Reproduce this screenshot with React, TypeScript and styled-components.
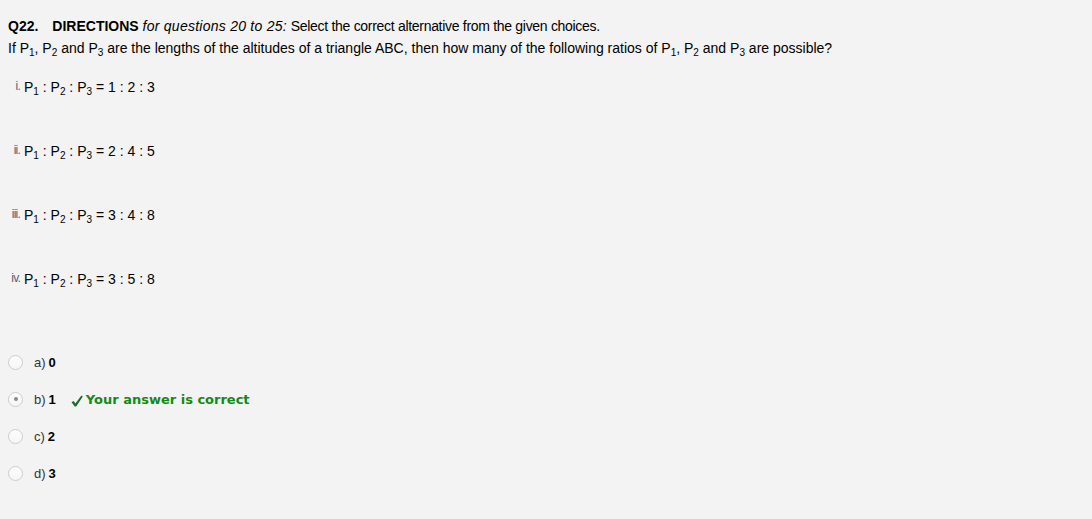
import React from "react";
import styled, { createGlobalStyle } from "styled-components";

// STYLES
const GlobalStyle = createGlobalStyle`
  html, body {
    margin: 0;
    padding: 0;
    background: #f3f3f3;
  }
`;

const Page = styled.main`
  min-height: 519px;
  padding: 17px 8px 0 8px;
  font-family: "Liberation Sans", Arial, sans-serif;
  font-size: 14px;
  color: #000;
`;

const Heading = styled.div`
  line-height: 18px;
  white-space: nowrap;
`;

const Number = styled.b`
  margin-right: 14px;
`;

const Note = styled.i`
  letter-spacing: 0.25px;
`;

const Instruction = styled.span`
  letter-spacing: -0.3px;
`;

const Question = styled.div`
  line-height: 18px;
  margin-top: 4px;
`;

const Statements = styled.ol`
  list-style: none;
  margin: 21px 0 0 0;
  padding: 0;
  display: flex;
  flex-direction: column;
  gap: 46px;
`;

const Statement = styled.li`
  display: flex;
  align-items: baseline;
  line-height: 18px;
  height: 18px;
`;

const Numeral = styled.span`
  font-size: 12px;
  color: #5a6070;
  width: 12px;
  padding-right: 4px;
  text-align: right;
  letter-spacing: -0.8px;
  position: relative;
  top: -2px;
`;

const Sub = styled.sub`
  font-size: 10px;
  vertical-align: -3px;
  line-height: 0;
`;

const Options = styled.div`
  margin-top: 66px;
  display: flex;
  flex-direction: column;
  gap: 21px;
`;

const Option = styled.label`
  display: flex;
  align-items: center;
  height: 16px;
  font-size: 13px;
`;

const Radio = styled.span<{ $checked?: boolean }>`
  width: 13px;
  height: 13px;
  border-radius: 50%;
  border: 1px solid #cdcdcd;
  background: linear-gradient(180deg, #fdfdfd 0%, #f6f6f6 100%);
  display: flex;
  align-items: center;
  justify-content: center;
  margin-right: 11px;

  &::after {
    content: "";
    width: 4px;
    height: 4px;
    border-radius: 50%;
    background: ${(p) => (p.$checked ? "#8a8a8a" : "transparent")};
  }
`;

const Letter = styled.span`
  color: #333;
  margin-right: 3px;
`;

const Feedback = styled.span`
  display: flex;
  align-items: center;
  margin-left: 15px;
  font-family: "DejaVu Sans", Verdana, sans-serif;
  font-weight: bold;
  font-size: 13px;
  color: #138a13;

  svg {
    margin-right: 3px;
    margin-top: 3px;
  }
`;

const sub = (n: number) => (
  <>
    P<Sub>{n}</Sub>
  </>
);

const ratios = [
  { n: "i.", v: "1 : 2 : 3" },
  { n: "ii.", v: "2 : 4 : 5" },
  { n: "iii.", v: "3 : 4 : 8" },
  { n: "iv.", v: "3 : 5 : 8" },
];

const choices = [
  { l: "a)", v: "0" },
  { l: "b)", v: "1", checked: true },
  { l: "c)", v: "2" },
  { l: "d)", v: "3" },
];

const App: React.FC = () => {
  return (
    <Page>
      <GlobalStyle />
      <Heading>
        <Number>Q22.</Number>
        <b>DIRECTIONS</b> <Note>for questions 20 to 25:</Note>{" "}
        <Instruction>
          Select the correct alternative from the given choices.
        </Instruction>
      </Heading>
      <Question>
        If {sub(1)}, {sub(2)} and {sub(3)} are the lengths of the altitudes of a
        triangle ABC, then how many of the following ratios of {sub(1)},{" "}
        {sub(2)} and {sub(3)} are possible?
      </Question>
      <Statements>
        {ratios.map((r) => (
          <Statement key={r.n}>
            <Numeral>{r.n}</Numeral>
            <span>
              {sub(1)} : {sub(2)} : {sub(3)} = {r.v}
            </span>
          </Statement>
        ))}
      </Statements>
      <Options>
        {choices.map((c) => (
          <Option key={c.l}>
            <Radio $checked={c.checked} />
            <Letter>{c.l}</Letter>
            <b>{c.v}</b>
            {c.checked && (
              <Feedback>
                <svg width="12" height="12" viewBox="0 0 12 12">
                  <path
                    d="M0.5 7.2 L2.6 6 L4.4 8.4 L10.4 0.6 L11.8 1.4 L5.2 11.6 L3.8 11.6 Z"
                    fill="#1a6b2c"
                  />
                </svg>
                Your answer is correct
              </Feedback>
            )}
          </Option>
        ))}
      </Options>
    </Page>
  );
};

export default App;
